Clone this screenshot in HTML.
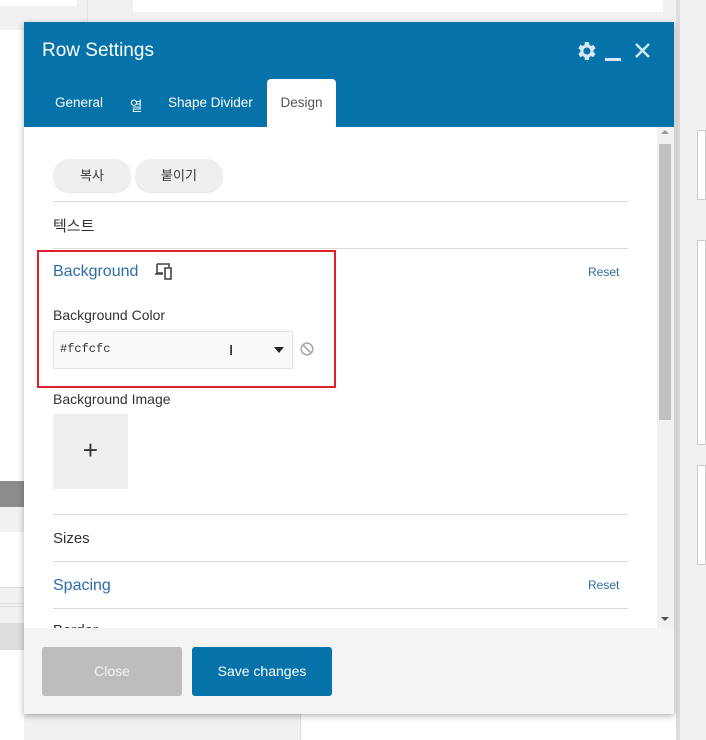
<!DOCTYPE html>
<html><head><meta charset="utf-8"><style>
*{box-sizing:border-box;margin:0;padding:0}
body{width:706px;height:740px;background:#f1f1f1;position:relative;overflow:hidden;font-family:"Liberation Sans","Noto Sans CJK KR",sans-serif;font-size:14px;color:#333}
.abs{position:absolute}
.modal{left:24px;top:22px;width:650px;height:692px;background:#fff;box-shadow:0 2px 6px rgba(0,0,0,.3)}
.hdr{left:0;top:0;width:650px;height:105px;background:#0573aa}
.title{left:18px;top:18px;color:#fff;font-size:19px}
.tab{top:73px;color:#fff;font-size:13.5px}
.dtab{left:243px;top:57px;width:69px;height:48px;background:#fff;border-radius:4px 4px 0 0;color:#555;font-size:13.5px;text-align:center;padding-top:16px}
.btn{top:137px;height:33px;background:#efefef;border-radius:16px;font-size:13px;text-align:center;line-height:33px;box-shadow:0 1px 1px rgba(0,0,0,.1)}
.hr{left:29px;width:575px;height:1px;background:#ddd}
.blue{color:#2b6ea8}
</style></head><body>
<div class="abs" style="left:0;top:0;width:77px;height:6px;background:#fff"></div>
<div class="abs" style="left:87px;top:0;width:1px;height:30px;background:#e4e4e4"></div>
<div class="abs" style="left:0;top:30px;width:88px;height:451px;background:#fff"></div>
<div class="abs" style="left:133px;top:0;width:530px;height:12px;background:#fff"></div>
<div class="abs" style="left:0;top:481px;width:24px;height:26px;background:#8a8c8e"></div>
<div class="abs" style="left:0;top:532px;width:24px;height:55px;background:#fff"></div>
<div class="abs" style="left:0;top:587px;width:24px;height:1px;background:#ddd"></div>
<div class="abs" style="left:0;top:603px;width:24px;height:1px;background:#ddd"></div>
<div class="abs" style="left:0;top:606px;width:24px;height:1px;background:#ddd"></div>
<div class="abs" style="left:0;top:623px;width:24px;height:27px;background:#ddd"></div>
<div class="abs" style="left:0;top:650px;width:24px;height:90px;background:#fff"></div>
<div class="abs" style="left:300px;top:714px;width:376px;height:26px;background:#fff;border-left:1px solid #ddd"></div>
<div class="abs" style="left:676px;top:0;width:4px;height:740px;background:#ddd"></div>
<div class="abs" style="left:697px;top:130px;width:9px;height:70px;background:#fff;border:1px solid #ccc"></div>
<div class="abs" style="left:697px;top:240px;width:9px;height:205px;background:#fff;border:1px solid #ccc"></div>
<div class="abs" style="left:697px;top:465px;width:9px;height:100px;background:#fff;border:1px solid #ccc"></div>
<div class="abs modal">
 <div class="abs hdr">
  <div class="abs title">Row Settings</div>
  <svg class="abs" style="left:550px;top:17px" width="24" height="24" viewBox="0 0 24 24"><path fill="#d5e8f3" d="M19.4 13c.04-.3.06-.65.06-1s-.02-.7-.06-1l2.1-1.65-2-3.46-2.5 1a7.3 7.3 0 0 0-1.7-1L14.9 3h-4l-.4 2.9c-.6.25-1.2.6-1.7 1l-2.5-1-2 3.46L6.4 11c-.05.3-.07.65-.07 1s.02.7.07 1l-2.1 1.65 2 3.46 2.5-1c.5.4 1.1.75 1.7 1l.4 2.9h4l.4-2.9c.6-.25 1.2-.6 1.7-1l2.5 1 2-3.46zM12.9 15.5a3.5 3.5 0 1 1 0-7 3.5 3.5 0 0 1 0 7z"/></svg>
  <div class="abs" style="left:581px;top:36px;width:16px;height:3px;background:#d5e8f3"></div>
  <svg class="abs" style="left:610px;top:20px" width="17" height="17" viewBox="0 0 17 17"><path d="M2 2L15 15M15 2L2 15" stroke="#d5e8f3" stroke-width="2.4"/></svg>
  <div class="abs tab" style="left:31px">General</div>
  <div class="abs tab" style="left:106px">열</div>
  <div class="abs tab" style="left:144px">Shape Divider</div>
  <div class="abs dtab">Design</div>
 </div>
 <div class="abs" style="left:633px;top:105px;width:17px;height:501px;background:#f1f1f1"></div>
 <div class="abs" style="left:635px;top:122px;width:12px;height:276px;background:#c1c1c1"></div>
 <div class="abs" style="left:637px;top:108px;width:0;height:0;border:4px solid transparent;border-bottom-color:#999;border-top:0"></div>
 <div class="abs" style="left:637px;top:595px;width:0;height:0;border:4px solid transparent;border-top-color:#555;border-bottom:0"></div>
 <div class="abs btn" style="left:29px;width:78px">복사</div>
 <div class="abs btn" style="left:111px;width:88px">붙이기</div>
 <div class="abs hr" style="top:179px"></div>
 <div class="abs" style="left:29px;top:193px;font-size:15px">텍스트</div>
 <div class="abs hr" style="top:226px"></div>
 <div class="abs" style="left:13px;top:228px;width:299px;height:138px;border:2px solid #e0202a"></div>
 <div class="abs blue" style="left:29px;top:241px;font-size:16px">Background</div>
 <svg class="abs" style="left:131px;top:241px" width="20" height="17" viewBox="0 0 20 17"><path d="M2 1h12v3M2 1v9h6M0 11h8" stroke="#444" stroke-width="1.6" fill="none"/><rect x="10" y="5" width="6" height="11" stroke="#444" stroke-width="1.6" fill="none"/></svg>
 <div class="abs blue" style="left:564px;top:243px;font-size:12px">Reset</div>
 <div class="abs" style="left:29px;top:285px;font-size:14px">Background Color</div>
 <div class="abs" style="left:29px;top:309px;width:240px;height:38px;background:#fafafa;border:1px solid #e2e2e2"></div>
 <div class="abs" style="left:36px;top:320px;font-size:12px;font-family:'Liberation Mono',monospace;color:#333">#fcfcfc</div>
 <div class="abs" style="left:205px;top:320px;font-size:15px;color:#000">I</div>
 <div class="abs" style="left:250px;top:325px;width:0;height:0;border:5px solid transparent;border-top:6px solid #222;border-bottom:0"></div>
 <svg class="abs" style="left:276px;top:320px" width="14" height="14" viewBox="0 0 14 14"><circle cx="7" cy="7" r="5.8" stroke="#aaa" stroke-width="1.6" fill="none"/><path d="M3 3L11 11" stroke="#aaa" stroke-width="1.6"/></svg>
 <div class="abs" style="left:29px;top:369px;font-size:14px">Background Image</div>
 <div class="abs" style="left:29px;top:392px;width:75px;height:75px;background:#efefef;text-align:center;line-height:73px;font-size:26px;color:#333">+</div>
 <div class="abs hr" style="top:492px"></div>
 <div class="abs" style="left:29px;top:508px;font-size:15px">Sizes</div>
 <div class="abs hr" style="top:539px"></div>
 <div class="abs blue" style="left:29px;top:555px;font-size:16px">Spacing</div>
 <div class="abs blue" style="left:564px;top:556px;font-size:12px">Reset</div>
 <div class="abs hr" style="top:586px"></div>
 <div class="abs" style="left:29px;top:600px;font-size:15px;height:6px;overflow:hidden">Border</div>
 <div class="abs" style="left:0;top:606px;width:650px;height:86px;background:#f4f4f4"></div>
 <div class="abs" style="left:18px;top:625px;width:140px;height:49px;background:#bdbdbd;border-radius:3px;color:#f4f4f4;text-align:center;line-height:49px;font-size:14px">Close</div>
 <div class="abs" style="left:168px;top:625px;width:140px;height:49px;background:#0573aa;border-radius:3px;color:#fff;text-align:center;line-height:49px;font-size:14px">Save changes</div>
</div>
</body></html>
